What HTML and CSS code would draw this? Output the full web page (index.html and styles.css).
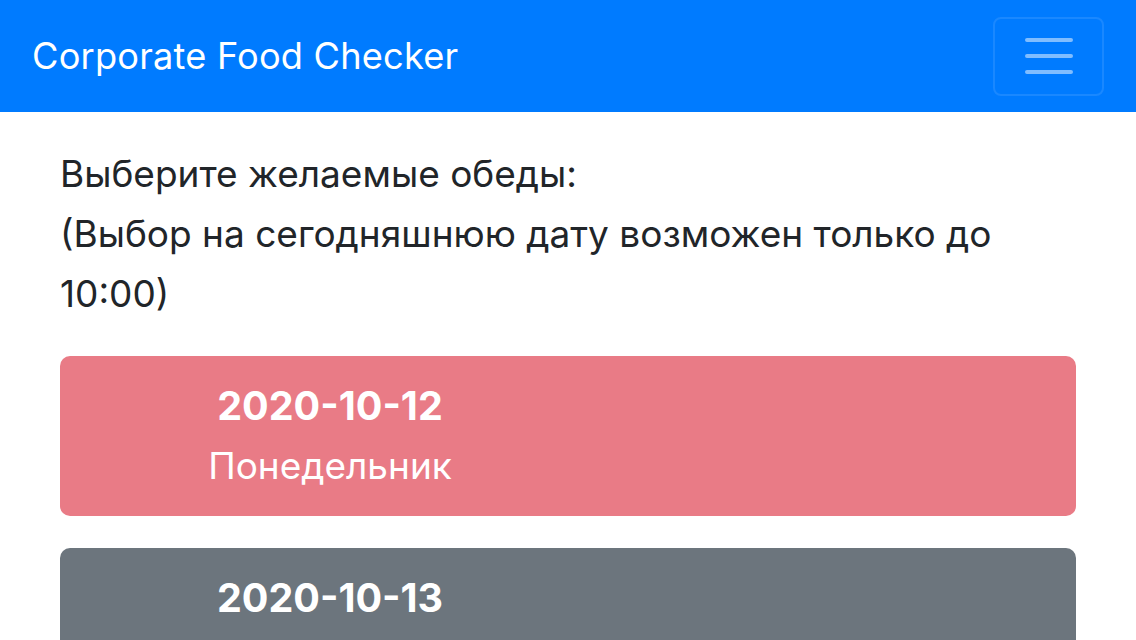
FILE: index.html
```html
<!DOCTYPE html>
<html lang="ru">
<head>
<meta charset="utf-8">
<title>Corporate Food Checker</title>
<link rel="stylesheet" href="styles.css">
</head>
<body>
<nav class="navbar">
  <span class="brand">Corporate Food Checker</span>
  <button class="toggler" type="button" aria-label="Toggle navigation">
    <svg class="toggler-icon" viewBox="0 0 30 30" width="60" height="60">
      <path d="M4 7h22M4 15h22M4 23h22" stroke="rgba(255,255,255,0.5)" stroke-width="2" stroke-linecap="round"/>
    </svg>
  </button>
</nav>
<main class="content">
  <p class="intro">Выберите желаемые обеды:<br>(Выбор на сегодняшнюю дату возможен только до 10:00)</p>
  <div class="day-card day-card--past">
    <div class="day-head">
      <div class="day-date">2020-10-12</div>
      <div class="day-name">Понедельник</div>
    </div>
  </div>
  <div class="day-card day-card--closed">
    <div class="day-head">
      <div class="day-date">2020-10-13</div>
      <div class="day-name">Вторник</div>
    </div>
  </div>
</main>
</body>
</html>
```
FILE: styles.css
```css
html, body {
  margin: 0;
  padding: 0;
}
body {
  font-family: Inter, "Noto Sans", sans-serif;
  color: #212529;
  background: #fff;
  height: 640px;
  overflow: hidden;
}
.navbar {
  height: 112px;
  box-sizing: border-box;
  background: #007bff;
  display: flex;
  align-items: center;
  justify-content: space-between;
  padding: 0 32px;
}
.brand {
  color: #fff;
  font-size: 36.2px;
  line-height: 1;
  letter-spacing: 0.2px;
  margin-top: 1px;
}
.toggler {
  width: 111px;
  height: 79px;
  box-sizing: border-box;
  background: transparent;
  border: 2px solid rgba(255,255,255,0.1);
  border-radius: 8px;
  display: flex;
  align-items: center;
  justify-content: center;
  padding: 0;
}
.toggler-icon {
  display: block;
}
.content {
  padding: 0 60px;
}
.intro {
  margin: 32px 0 32px;
  font-size: 37px;
  line-height: 60px;
}
.day-card {
  border-radius: 10px;
  color: #fff;
  padding: 20px 0;
  margin-bottom: 32px;
}
.day-card--past { background: #e97b86; }
.day-card--closed { background: #6c757d; }
.day-head {
  width: 540px;
  text-align: center;
  line-height: 60px;
}
.day-date {
  font-size: 39.5px;
  font-weight: 700;
}
.day-name {
  font-size: 37px;
}
```
